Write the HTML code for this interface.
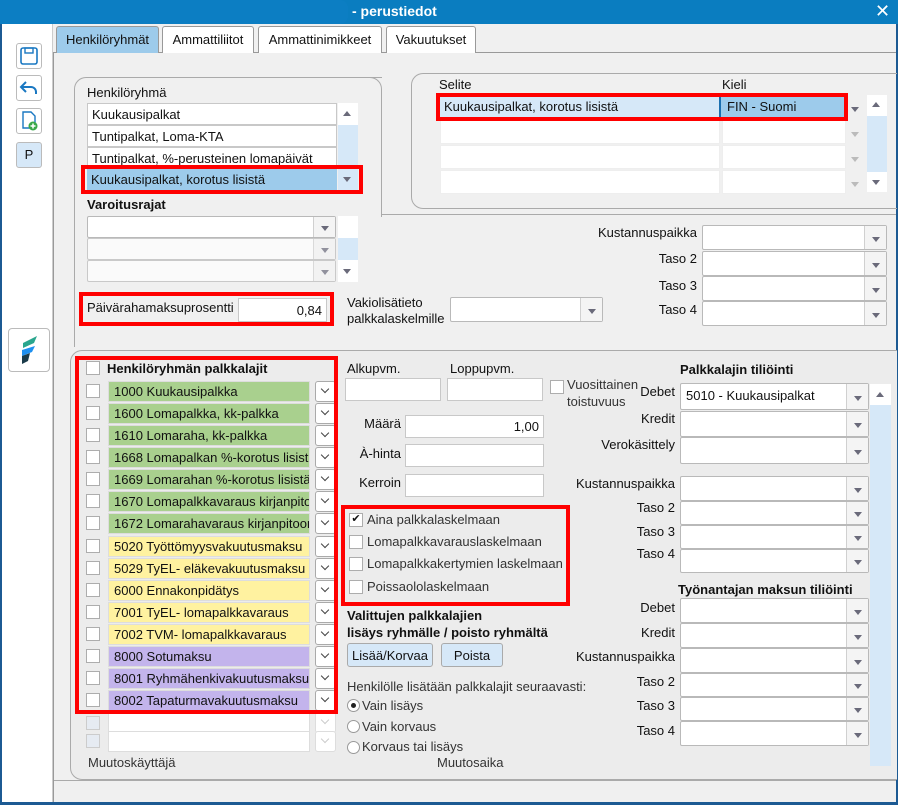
<!DOCTYPE html>
<html><head><meta charset="utf-8"><style>
*{box-sizing:border-box;margin:0;padding:0}
body{width:898px;height:805px;overflow:hidden;background:#f0f0f0;font-family:"Liberation Sans",Arial,sans-serif;font-size:13px;color:#111;position:relative}
.a{position:absolute;white-space:nowrap}
.b{font-weight:bold}
.in{position:absolute;background:#fff;border:1px solid #c8c8c8;white-space:nowrap}
.dd{position:absolute;background:#fff;border:1px solid #b9b9b9;border-radius:2px;white-space:nowrap}
.dd::after{content:"";position:absolute;right:0;top:0;bottom:0;width:21px;border-left:1px solid #d0d0d0;background:#f4f4f4}
.dd::before{content:"";position:absolute;right:6px;top:50%;margin-top:-1px;border-left:4.5px solid transparent;border-right:4.5px solid transparent;border-top:5px solid #6a6a7a;z-index:2}
.cb{position:absolute;width:14px;height:14px;background:#fff;border:1px solid #adadad}
.it{position:absolute;left:108px;width:202px;height:21px;padding:2px 0 0 5px;border:1px solid #ddd;white-space:nowrap;overflow:hidden}
.g{background:#a9d08e}.y{background:#fff2a0}.p{background:#c3b4ec}
.vb{position:absolute;left:315px;width:21px;height:21px;background:#fff;border:1px solid #aaa;border-radius:3px}
.vb::after{content:"";position:absolute;left:6px;top:4px;width:5px;height:5px;border-right:1.6px solid #444;border-bottom:1.6px solid #444;transform:rotate(45deg)}
.vb.d{border-color:#ddd}.vb.d::after{border-color:#ccc}
.red{position:absolute;border:4px solid #f00}
.lr{position:absolute;text-align:right;white-space:nowrap}
.tab{position:absolute;top:26px;height:27px;border:1px solid #999;border-bottom:none;background:#fff;border-radius:3px 3px 0 0;text-align:center;padding-top:5px}
.tb{position:absolute;left:16px;width:26px;height:26px;background:#fff;border:1px solid #bbb;border-radius:3px}
.rd{position:absolute;left:347px;width:13px;height:13px;border-radius:50%;background:#fff;border:1px solid #999}
.up{position:absolute;width:0;height:0;border-left:4.5px solid transparent;border-right:4.5px solid transparent}
</style></head><body>
<div class="a" style="left:0;top:0;width:898px;height:24px;background:#0a7dc0"></div>
<div class="a" style="left:0;top:0;width:348px;height:24px;background:#0c7ec3;border-radius:0 8px 8px 0"></div>
<div class="a b" style="left:352px;top:3px;color:#fff;font-size:14px">- perustiedot</div>
<div class="a" style="left:875px;top:1px;color:#fff;font-size:18px">✕</div>
<div class="a" style="left:0;top:24px;width:53px;height:781px;background:#fff;border-right:1px solid #ccc"></div>
<div class="a" style="left:0;top:24px;width:2px;height:781px;background:#1c5a93"></div>
<div class="a" style="left:896px;top:24px;width:2px;height:781px;background:#1c5a93"></div>
<div class="a" style="left:0;top:802px;width:898px;height:3px;background:#1c5a93"></div>
<div class="tb" style="top:43px"><svg width="24" height="24" viewBox="0 0 24 24"><rect x="4" y="4" width="16" height="16" rx="2" fill="none" stroke="#1a78c2" stroke-width="1.6"/><rect x="8" y="4" width="8" height="5" fill="none" stroke="#1a78c2" stroke-width="1.4"/></svg></div>
<div class="tb" style="top:75px"><svg width="24" height="24" viewBox="0 0 24 24"><path d="M9 6L4 11l5 5M4 11h10a5 5 0 0 1 5 5v2" fill="none" stroke="#1a78c2" stroke-width="2"/></svg></div>
<div class="tb" style="top:108px"><svg width="24" height="24" viewBox="0 0 24 24"><path d="M6 3h8l4 4v12H6z" fill="none" stroke="#1a78c2" stroke-width="1.4"/><circle cx="16" cy="17" r="4.5" fill="#3aa84a"/><path d="M16 14.5v5M13.5 17h5" stroke="#fff" stroke-width="1.5"/></svg></div>
<div class="tb" style="top:142px;background:#d6e8f8;text-align:center;padding-top:4px">P</div>
<div class="a" style="left:8px;top:328px;width:42px;height:44px;background:#fff;border:1px solid #bbb;border-radius:4px"><svg width="40" height="42" viewBox="0 0 40 42"><path d="M14 14l14-7-3 7-11 5z" fill="#2aa68e"/><path d="M13 21l13-4-3 6-10 4z" fill="#1e90f0"/><path d="M13 27l8-3-2 8-6 3z" fill="#1a3b4a"/></svg></div>
<div class="a" style="left:53px;top:52px;width:843px;height:750px;border-top:1px solid #999;border-left:1px solid #999;background:#f0f0f0"></div>
<div class="tab" style="left:56px;width:103px;background:#9dcbeb;height:27px">Henkilöryhmät</div>
<div class="tab" style="left:162px;width:92px">Ammattiliitot</div>
<div class="tab" style="left:258px;width:124px">Ammattinimikkeet</div>
<div class="tab" style="left:386px;width:90px">Vakuutukset</div>
<div class="a" style="left:74px;top:77px;width:308px;height:270px;border:1px solid #aaa;border-right:none;border-bottom:none;border-radius:12px 0 0 0"></div>
<div class="a" style="left:370px;top:77px;width:12px;height:140px;border:1px solid #aaa;border-left:none;border-bottom:none;border-radius:0 12px 0 0"></div>
<div class="a" style="left:381px;top:214px;width:515px;height:1px;background:#aaa"></div>
<div class="a" style="left:87px;top:85px">Henkilöryhmä</div>
<div class="in" style="left:87px;top:103px;width:250px;height:22px;padding:3px 4px">Kuukausipalkat</div>
<div class="in" style="left:87px;top:125px;width:250px;height:22px;padding:3px 4px">Tuntipalkat, Loma-KTA</div>
<div class="in" style="left:87px;top:147px;width:250px;height:22px;padding:3px 4px">Tuntipalkat, %-perusteinen lomapäivät</div>
<div class="a" style="left:87px;top:169px;width:250px;height:22px;padding:3px 4px;background:#9dcbeb">Kuukausipalkat, korotus lisistä</div>
<div class="a" style="left:338px;top:103px;width:20px;height:88px;background:#d6e8f8"></div>
<div class="a" style="left:338px;top:103px;width:20px;height:22px;background:#fff"></div>
<div class="up" style="left:343px;top:111px;border-bottom:5px solid #6a6a7a"></div>
<div class="up" style="left:343px;top:177px;border-top:5px solid #6a6a7a"></div>
<div class="red" style="left:81px;top:165px;width:282px;height:29px"></div>
<div class="a b" style="left:87px;top:197px">Varoitusrajat</div>
<div class="dd" style="left:87px;top:216px;width:249px;height:22px"></div>
<div class="dd" style="left:87px;top:238px;width:249px;height:22px;opacity:.7"></div>
<div class="dd" style="left:87px;top:260px;width:249px;height:22px;opacity:.7"></div>
<div class="a" style="left:338px;top:216px;width:20px;height:66px;background:#d6e8f8"></div>
<div class="a" style="left:338px;top:216px;width:20px;height:22px;background:#fff"></div>
<div class="a" style="left:338px;top:260px;width:20px;height:22px;background:#fff"></div>
<div class="up" style="left:343px;top:269px;border-top:5px solid #6a6a7a"></div>
<div class="a" style="left:87px;top:300px">Päivärahamaksuprosentti</div>
<div class="in" style="left:238px;top:298px;width:89px;height:24px;text-align:right;padding:4px 4px">0,84</div>
<div class="red" style="left:79px;top:292px;width:255px;height:34px"></div>
<div class="a" style="left:347px;top:295px;line-height:16px">Vakiolisätieto<br>palkkalaskelmille</div>
<div class="dd" style="left:450px;top:297px;width:153px;height:25px"></div>
<div class="a" style="left:411px;top:73px;width:486px;height:136px;border:1px solid #aaa;border-right:none;border-radius:12px 0 0 12px"></div>
<div class="a" style="left:439px;top:77px">Selite</div>
<div class="a" style="left:722px;top:77px">Kieli</div>
<div class="a" style="left:440px;top:97px;width:279px;height:20px;background:#d6e8f8;padding:2px 4px">Kuukausipalkat, korotus lisistä</div>
<div class="a" style="left:719px;top:97px;width:125px;height:20px;background:#9dcbeb;border-left:2px solid #1a6fb0;padding:2px 6px">FIN - Suomi</div>
<div class="up" style="left:851px;top:107px;border-top:5px solid #6a6a7a"></div>
<div class="in" style="left:440px;top:120px;width:280px;height:24px;border-color:#eee"></div>
<div class="in" style="left:440px;top:145px;width:280px;height:24px;border-color:#eee"></div>
<div class="in" style="left:440px;top:170px;width:280px;height:24px;border-color:#eee"></div>
<div class="in" style="left:722px;top:120px;width:124px;height:24px;border-color:#eee"></div>
<div class="in" style="left:722px;top:145px;width:124px;height:24px;border-color:#eee"></div>
<div class="in" style="left:722px;top:170px;width:124px;height:24px;border-color:#eee"></div>
<div class="up" style="left:851px;top:132px;border-top:5px solid #bbb"></div>
<div class="up" style="left:851px;top:157px;border-top:5px solid #bbb"></div>
<div class="up" style="left:851px;top:182px;border-top:5px solid #bbb"></div>
<div class="a" style="left:867px;top:95px;width:20px;height:97px;background:#d6e8f8"></div>
<div class="a" style="left:867px;top:95px;width:20px;height:21px;background:#fff"></div>
<div class="a" style="left:867px;top:172px;width:20px;height:20px;background:#fff"></div>
<div class="up" style="left:872px;top:102px;border-bottom:5px solid #6a6a7a"></div>
<div class="up" style="left:872px;top:180px;border-top:5px solid #6a6a7a"></div>
<div class="red" style="left:436px;top:93px;width:412px;height:28px"></div>
<div class="lr" style="left:560px;width:137px;top:225px">Kustannuspaikka</div>
<div class="lr" style="left:560px;width:137px;top:251px">Taso 2</div>
<div class="lr" style="left:560px;width:137px;top:278px">Taso 3</div>
<div class="lr" style="left:560px;width:137px;top:302px">Taso 4</div>
<div class="dd" style="left:702px;top:225px;width:185px;height:25px"></div>
<div class="dd" style="left:702px;top:251px;width:185px;height:25px"></div>
<div class="dd" style="left:702px;top:276px;width:185px;height:25px"></div>
<div class="dd" style="left:702px;top:301px;width:185px;height:25px"></div>
<div class="a" style="left:70px;top:350px;width:827px;height:430px;border:1px solid #aaa;border-right:none;border-radius:12px 0 0 12px;background:#ececec"></div>
<div class="cb" style="left:86px;top:361px"></div>
<div class="a b" style="left:107px;top:361px">Henkilöryhmän palkkalajit</div>
<div class="cb" style="left:86px;top:384px"></div><div class="it g" style="top:381px">1000 Kuukausipalkka</div><div class="vb" style="top:381px"></div>
<div class="cb" style="left:86px;top:406px"></div><div class="it g" style="top:403px">1600 Lomapalkka, kk-palkka</div><div class="vb" style="top:403px"></div>
<div class="cb" style="left:86px;top:428px"></div><div class="it g" style="top:425px">1610 Lomaraha, kk-palkka</div><div class="vb" style="top:425px"></div>
<div class="cb" style="left:86px;top:450px"></div><div class="it g" style="top:447px">1668 Lomapalkan %-korotus lisistä</div><div class="vb" style="top:447px"></div>
<div class="cb" style="left:86px;top:472px"></div><div class="it g" style="top:469px">1669 Lomarahan %-korotus lisistä</div><div class="vb" style="top:469px"></div>
<div class="cb" style="left:86px;top:494px"></div><div class="it g" style="top:491px">1670 Lomapalkkavaraus kirjanpitoon</div><div class="vb" style="top:491px"></div>
<div class="cb" style="left:86px;top:516px"></div><div class="it g" style="top:513px">1672 Lomarahavaraus kirjanpitoon</div><div class="vb" style="top:513px"></div>
<div class="cb" style="left:86px;top:539px"></div><div class="it y" style="top:536px">5020 Työttömyysvakuutusmaksu</div><div class="vb" style="top:536px"></div>
<div class="cb" style="left:86px;top:561px"></div><div class="it y" style="top:558px">5029 TyEL- eläkevakuutusmaksu</div><div class="vb" style="top:558px"></div>
<div class="cb" style="left:86px;top:583px"></div><div class="it y" style="top:580px">6000 Ennakonpidätys</div><div class="vb" style="top:580px"></div>
<div class="cb" style="left:86px;top:605px"></div><div class="it y" style="top:602px">7001 TyEL- lomapalkkavaraus</div><div class="vb" style="top:602px"></div>
<div class="cb" style="left:86px;top:627px"></div><div class="it y" style="top:624px">7002 TVM- lomapalkkavaraus</div><div class="vb" style="top:624px"></div>
<div class="cb" style="left:86px;top:649px"></div><div class="it p" style="top:646px">8000 Sotumaksu</div><div class="vb" style="top:646px"></div>
<div class="cb" style="left:86px;top:671px"></div><div class="it p" style="top:668px">8001 Ryhmähenkivakuutusmaksu</div><div class="vb" style="top:668px"></div>
<div class="cb" style="left:86px;top:693px"></div><div class="it p" style="top:690px">8002 Tapaturmavakuutusmaksu</div><div class="vb" style="top:690px"></div>
<div class="cb" style="left:86px;top:716px;background:#e6ebf2;border-color:#ccc"></div><div class="it" style="top:712px;background:#fff"></div><div class="vb d" style="top:712px"></div>
<div class="cb" style="left:86px;top:734px;background:#e6ebf2;border-color:#ccc"></div><div class="it" style="top:731px;background:#fff"></div><div class="vb d" style="top:731px"></div>
<div class="red" style="left:75px;top:356px;width:263px;height:358px"></div>
<div class="a" style="left:88px;top:755px;color:#333">Muutoskäyttäjä</div>
<div class="a" style="left:347px;top:361px">Alkupvm.</div>
<div class="a" style="left:450px;top:361px">Loppupvm.</div>
<div class="in" style="left:345px;top:378px;width:96px;height:23px"></div>
<div class="in" style="left:447px;top:378px;width:96px;height:23px"></div>
<div class="cb" style="left:550px;top:380px"></div>
<div class="a" style="left:567px;top:376px;line-height:17px;color:#333">Vuosittainen<br>toistuvuus</div>
<div class="lr" style="left:340px;width:61px;top:416px">Määrä</div>
<div class="lr" style="left:340px;width:61px;top:446px">À-hinta</div>
<div class="lr" style="left:340px;width:61px;top:475px">Kerroin</div>
<div class="in" style="left:405px;top:415px;width:139px;height:23px;text-align:right;padding:3px 4px">1,00</div>
<div class="in" style="left:405px;top:444px;width:139px;height:23px"></div>
<div class="in" style="left:405px;top:474px;width:139px;height:23px"></div>
<div class="cb" style="left:349px;top:513px;font-size:11px;line-height:11px;text-align:center">✔</div><div class="a" style="left:367px;top:512px;color:#333">Aina palkkalaskelmaan</div>
<div class="cb" style="left:349px;top:535px"></div><div class="a" style="left:367px;top:534px;color:#333">Lomapalkkavarauslaskelmaan</div>
<div class="cb" style="left:349px;top:557px"></div><div class="a" style="left:367px;top:556px;color:#333">Lomapalkkakertymien laskelmaan</div>
<div class="cb" style="left:349px;top:580px"></div><div class="a" style="left:367px;top:579px;color:#333">Poissaololaskelmaan</div>
<div class="red" style="left:341px;top:505px;width:229px;height:101px"></div>
<div class="a b" style="left:347px;top:607px;line-height:17px">Valittujen palkkalajien<br>lisäys ryhmälle / poisto ryhmältä</div>
<div class="a" style="left:347px;top:643px;width:86px;height:24px;background:#d6e8f8;border:1px solid #aaa;border-radius:3px;text-align:center;padding-top:4px">Lisää/Korvaa</div>
<div class="a" style="left:441px;top:643px;width:62px;height:24px;background:#d6e8f8;border:1px solid #aaa;border-radius:3px;text-align:center;padding-top:4px">Poista</div>
<div class="a" style="left:347px;top:679px;color:#333">Henkilölle lisätään palkkalajit seuraavasti:</div>
<div class="rd" style="left:347px;top:699px"><div style="width:5px;height:5px;background:#222;border-radius:50%;margin:3px"></div></div><div class="a" style="left:362px;top:698px;color:#333">Vain lisäys</div>
<div class="rd" style="left:347px;top:720px"></div><div class="a" style="left:362px;top:719px;color:#333">Vain korvaus</div>
<div class="rd" style="left:347px;top:741px"></div><div class="a" style="left:362px;top:739px;color:#333">Korvaus tai lisäys</div>
<div class="a" style="left:437px;top:755px;color:#333">Muutosaika</div>
<div class="a b" style="left:680px;top:362px">Palkkalajin tiliöinti</div>
<div class="lr" style="left:560px;width:115px;top:384px">Debet</div>
<div class="lr" style="left:560px;width:115px;top:411px">Kredit</div>
<div class="lr" style="left:560px;width:115px;top:437px">Verokäsittely</div>
<div class="dd" style="left:680px;top:383px;width:189px;height:27px;padding:4px 5px">5010 - Kuukausipalkat</div>
<div class="dd" style="left:680px;top:411px;width:189px;height:26px"></div>
<div class="dd" style="left:680px;top:437px;width:189px;height:27px"></div>
<div class="lr" style="left:560px;width:115px;top:476px">Kustannuspaikka</div>
<div class="lr" style="left:560px;width:115px;top:500px">Taso 2</div>
<div class="lr" style="left:560px;width:115px;top:524px">Taso 3</div>
<div class="lr" style="left:560px;width:115px;top:546px">Taso 4</div>
<div class="dd" style="left:680px;top:476px;width:189px;height:25px"></div>
<div class="dd" style="left:680px;top:501px;width:189px;height:24px"></div>
<div class="dd" style="left:680px;top:525px;width:189px;height:24px"></div>
<div class="dd" style="left:680px;top:549px;width:189px;height:24px"></div>
<div class="a b" style="left:678px;top:582px">Työnantajan maksun tiliöinti</div>
<div class="lr" style="left:560px;width:115px;top:600px">Debet</div>
<div class="lr" style="left:560px;width:115px;top:625px">Kredit</div>
<div class="lr" style="left:560px;width:115px;top:649px">Kustannuspaikka</div>
<div class="lr" style="left:560px;width:115px;top:674px">Taso 2</div>
<div class="lr" style="left:560px;width:115px;top:698px">Taso 3</div>
<div class="lr" style="left:560px;width:115px;top:723px">Taso 4</div>
<div class="dd" style="left:680px;top:598px;width:189px;height:25px"></div>
<div class="dd" style="left:680px;top:623px;width:189px;height:25px"></div>
<div class="dd" style="left:680px;top:648px;width:189px;height:25px"></div>
<div class="dd" style="left:680px;top:673px;width:189px;height:24px"></div>
<div class="dd" style="left:680px;top:697px;width:189px;height:24px"></div>
<div class="dd" style="left:680px;top:721px;width:189px;height:25px"></div>
<div class="a" style="left:870px;top:384px;width:21px;height:382px;background:#d6e8f8"></div>
<div class="a" style="left:870px;top:384px;width:21px;height:21px;background:#fff"></div>
<div class="up" style="left:876px;top:392px;border-bottom:5px solid #6a6a7a"></div>
<div class="a" style="left:54px;top:780px;width:842px;height:1px;background:#aaa"></div>
</body></html>
